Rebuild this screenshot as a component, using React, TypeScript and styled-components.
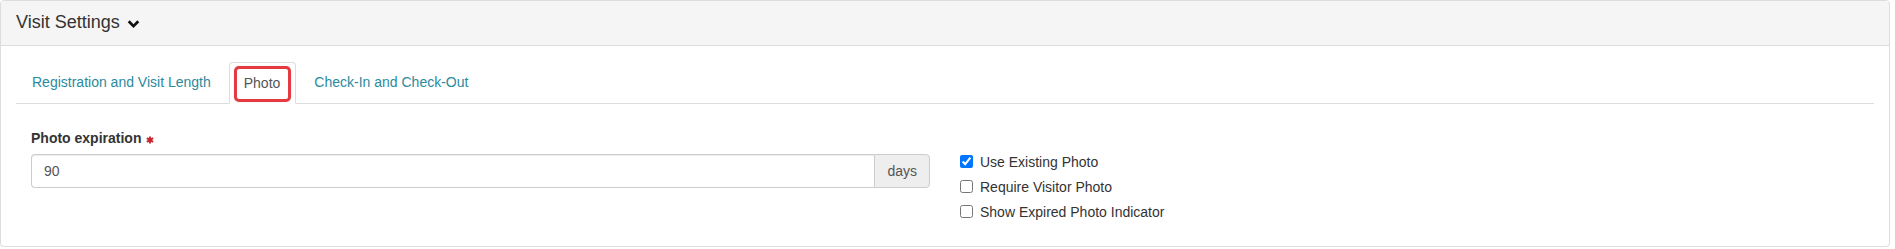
import React, { useState } from "react";
import styled, { createGlobalStyle } from "styled-components";

const GlobalStyle = createGlobalStyle`
  body {
    margin: 0;
    background: #fff;
    font-family: "Liberation Sans", Arial, sans-serif;
    font-size: 14px;
    color: #333;
  }
`;

const tabs = ["Registration and Visit Length", "Photo", "Check-In and Check-Out"];

const options = [
  { label: "Use Existing Photo", checked: true },
  { label: "Require Visitor Photo", checked: false },
  { label: "Show Expired Photo Indicator", checked: false },
];

const App = () => {
  const [active, setActive] = useState(1);
  const [checks, setChecks] = useState(options.map((o) => o.checked));

  return (
    <>
      <GlobalStyle />
      <Panel>
        <PanelHeading>
          Visit Settings
          <Chevron viewBox="0 0 14 10">
            <path d="M0.6 2.6 L2.8 0.4 L7 4.6 L11.2 0.4 L13.4 2.6 L7 9 Z" fill="#111" />
          </Chevron>
        </PanelHeading>
        <PanelBody>
          <TabList>
            {tabs.map((t, i) => (
              <Tab key={t} $active={i === active} onClick={() => setActive(i)}>
                {i === active ? <Focus>{t}</Focus> : t}
              </Tab>
            ))}
          </TabList>
          <FormRow>
            <Column>
              <Label>
                Photo expiration
                <Asterisk viewBox="0 0 10 10">
                  <g stroke="#c9252b" strokeWidth="2.4" strokeLinecap="butt">
                    <line x1="5" y1="0.5" x2="5" y2="9.5" />
                    <line x1="1.1" y1="2.75" x2="8.9" y2="7.25" />
                    <line x1="1.1" y1="7.25" x2="8.9" y2="2.75" />
                  </g>
                </Asterisk>
              </Label>
              <InputGroup>
                <TextInput defaultValue="90" />
                <Addon>days</Addon>
              </InputGroup>
            </Column>
            <Column>
              <CheckList>
                {options.map((o, i) => (
                  <CheckRow key={o.label}>
                    <CheckBox
                      type="checkbox"
                      checked={checks[i]}
                      onChange={() =>
                        setChecks((c) => c.map((v, j) => (j === i ? !v : v)))
                      }
                    />
                    {o.label}
                  </CheckRow>
                ))}
              </CheckList>
            </Column>
          </FormRow>
        </PanelBody>
      </Panel>
    </>
  );
};

const Panel = styled.div`
  width: 1890px;
  box-sizing: border-box;
  border: 1px solid #ddd;
  border-radius: 4px;
  background: #fff;
  box-shadow: 0 1px 1px rgba(0, 0, 0, 0.05);
`;

const PanelHeading = styled.div`
  height: 45px;
  box-sizing: border-box;
  padding: 0 15px 2px;
  display: flex;
  align-items: center;
  background: #f5f5f5;
  border-bottom: 1px solid #ddd;
  border-radius: 3px 3px 0 0;
  font-size: 18px;
  color: #333;
`;

const Chevron = styled.svg`
  width: 13px;
  height: 9px;
  margin-left: 7px;
  margin-top: 4px;
`;

const PanelBody = styled.div`
  padding: 15px 15px 22px;
`;

const TabList = styled.div`
  display: flex;
  align-items: flex-end;
  border-bottom: 1px solid #ddd;
`;

const Tab = styled.div<{ $active: boolean }>`
  margin-right: 2px;
  margin-bottom: ${({ $active }) => ($active ? "-1px" : "0")};
  padding: ${({ $active }) => ($active ? "3px 4px 1px 4px" : "10px 15px")};
  line-height: 20px;
  border: 1px solid ${({ $active }) => ($active ? "#ddd" : "transparent")};
  border-bottom-color: ${({ $active }) => ($active ? "#fff" : "transparent")};
  border-radius: 4px 4px 0 0;
  background: ${({ $active }) => ($active ? "#fff" : "transparent")};
  color: ${({ $active }) => ($active ? "#555" : "#2b8a9e")};
  cursor: pointer;
`;

const Focus = styled.span`
  display: block;
  padding: 4px 8px 6px 7px;
  border: 3px solid #e33b40;
  border-radius: 5px;
  box-shadow: 0 0 1px rgba(0, 0, 0, 0.3);
`;

const FormRow = styled.div`
  display: grid;
  grid-template-columns: 1fr 1fr;
  padding-top: 24px;
`;

const Column = styled.div`
  padding: 0 15px;
`;

const Label = styled.label`
  display: flex;
  align-items: center;
  font-weight: bold;
  line-height: 20px;
  margin-bottom: 6px;
  color: #333;
`;

const Asterisk = styled.svg`
  width: 8px;
  height: 8px;
  margin-left: 5px;
  margin-top: 3px;
`;

const InputGroup = styled.div`
  display: flex;
  height: 34px;
`;

const TextInput = styled.input`
  flex: 1;
  min-width: 0;
  box-sizing: border-box;
  height: 34px;
  padding: 6px 12px;
  font-family: inherit;
  font-size: 14px;
  color: #555;
  border: 1px solid #ccc;
  border-right: none;
  border-radius: 4px 0 0 4px;
  box-shadow: inset 0 1px 1px rgba(0, 0, 0, 0.075);
  outline: none;
`;

const Addon = styled.span`
  display: flex;
  align-items: center;
  padding: 0 12px;
  background: #eee;
  border: 1px solid #ccc;
  border-radius: 0 4px 4px 0;
  color: #555;
`;

const CheckList = styled.div`
  display: flex;
  flex-direction: column;
  padding-top: 21px;
`;

const CheckRow = styled.label`
  display: flex;
  align-items: center;
  height: 25px;
  color: #333;
`;

const CheckBox = styled.input`
  width: 13px;
  height: 13px;
  margin: 0 7px 0 0;
`;

export default App;
